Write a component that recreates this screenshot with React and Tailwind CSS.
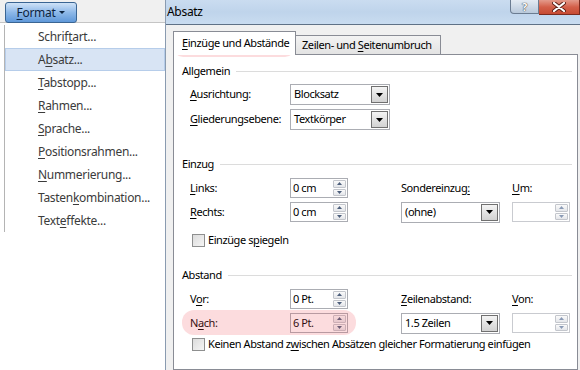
// Word "Format > Absatz" dialog, recreated with Tailwind classes

const Key = ({ children }) => (
  <span className="underline decoration-1 underline-offset-2">{children}</span>
);

const Triangle = ({ up, className = "fill-[#4d5f7c]" }) => (
  <svg width="5" height="3" viewBox="0 0 5 3" className={className}>
    {up ? <path d="M0 3 L2.5 0 L5 3 Z" /> : <path d="M0 0 L5 0 L2.5 3 Z" />}
  </svg>
);

const Spin = ({ value, disabled }) => (
  <div
    className={`w-[58px] h-[20px] border bg-white flex ${
      disabled ? "border-[#c9cbd0]" : "border-[#abadb3]"
    }`}
  >
    <div className="flex-1 pl-[2px] leading-[18px] text-black">{value}</div>
    <div className="w-[14px] flex flex-col py-[1px] pr-[1px] gap-[1px]">
      <div className="flex-1 border border-[#c3c6cc] rounded-[1px] bg-gradient-to-b from-[#fafafa] to-[#e4e6ea] flex items-center justify-center">
        <Triangle up className={disabled ? "fill-[#8a9ab5]" : "fill-[#4d5f7c]"} />
      </div>
      <div className="flex-1 border border-[#c3c6cc] rounded-[1px] bg-gradient-to-b from-[#fafafa] to-[#e4e6ea] flex items-center justify-center">
        <Triangle className={disabled ? "fill-[#8a9ab5]" : "fill-[#4d5f7c]"} />
      </div>
    </div>
  </div>
);

const Select = ({ value, width = "w-[100px]" }) => (
  <div className={`${width} h-[21px] border border-[#abadb3] bg-white flex items-center`}>
    <span className="flex-1 pl-[3px] text-black">{value}</span>
    <div className="w-[17px] h-[17px] mr-[1px] border border-[#707070] bg-gradient-to-b from-[#f4f4f4] to-[#d2d2d2] flex items-center justify-center">
      <svg width="7" height="4" viewBox="0 0 7 4">
        <path d="M0 0 L7 0 L3.5 4 Z" fill="#000" />
      </svg>
    </div>
  </div>
);

const CheckBox = ({ children }) => (
  <div className="flex items-center h-[14px] pl-[18px]">
    <div className="w-[13px] h-[13px] border border-[#8e8f8f] bg-gradient-to-br from-[#dcdcdc] to-[#f5f5f5]" />
    <span className="ml-[3px] text-black">{children}</span>
  </div>
);

const GroupHeader = ({ children }) => (
  <div className="h-[20px] flex items-center pl-[8px] pr-[5px] gap-[6px]">
    <span className="text-black">{children}</span>
    <div className="flex-1 h-px bg-[#dcdcdc]" />
  </div>
);

const Label = ({ children }) => (
  <div className="w-[100px] h-[20px] flex items-center text-black">{children}</div>
);

const menuItems = [
  ["Schrif", "t", "art..."],
  ["A", "b", "satz..."],
  ["", "T", "abstopp..."],
  ["", "R", "ahmen..."],
  ["", "S", "prache..."],
  ["", "P", "ositionsrahmen..."],
  ["", "N", "ummerierung..."],
  ["Tasten", "k", "ombination..."],
  ["Text", "e", "ffekte..."],
];

export default function App() {
  return (
    <div className="relative w-[580px] h-[370px] overflow-hidden flex bg-white whitespace-nowrap text-[12px] tracking-[-0.3px] font-['Segoe_UI','Noto_Sans',sans-serif]">
      {/* Left: Format menu */}
      <div className="w-[165px] flex flex-col">
        <div className="h-[23px] bg-[#f0f0f0] border-b border-[#c5c5c5] pl-[5px] pt-[2px]">
          <div className="w-[72px] h-[21px] rounded-[3px] border border-[#3a6593] bg-gradient-to-b from-[#cfe2f7] via-[#8db8e8] to-[#5f98d9] flex items-center justify-center gap-[4px] text-[#0d2440]">
            <span>
              <Key>F</Key>ormat
            </span>
            <svg width="6" height="3" viewBox="0 0 6 3">
              <path d="M0 0 L6 0 L3 3 Z" fill="#0d2440" />
            </svg>
          </div>
        </div>
        <div className="ml-[4px] mt-[2px] border-l border-[#b4b4b4] flex flex-col">
          {menuItems.map(([a, k, b], i) => (
            <div
              key={i}
              className={`h-[23px] flex items-center text-[#3b3b3b] ${
                i === 1 ? "bg-[#d8e4f4] border border-[#b6cdea] pl-[32px]" : "pl-[33px]"
              }`}
            >
              <span>
                {a}
                <Key>{k}</Key>
                {b}
              </span>
            </div>
          ))}
        </div>
      </div>

      {/* Right: Absatz dialog */}
      <div className="flex-1 flex flex-col bg-[#f0f0f0] border-l border-[#8a9bb0] text-[11px] tracking-[-0.42px]">
        <div className="relative h-[25px] border-b border-[#5f7186] bg-gradient-to-b from-[#cadcf0] via-[#bfd4eb] to-[#c9dcf0]">
          <span className="absolute left-[1px] top-[3px] text-[12px] tracking-[-0.3px] text-black">Absatz</span>
          <div className="absolute right-0 top-0 flex">
            <div className="w-[29px] h-[14px] border border-t-0 border-[#6b7c91] rounded-bl-[4px] bg-gradient-to-b from-[#e4ebf3] to-[#b9c9db] flex items-center justify-center text-[11px] font-bold leading-[13px] text-white [text-shadow:0_0_1px_#333,0_0_1px_#333]">
              ?
            </div>
            <div className="w-[41px] h-[15px] border border-t-0 border-l-0 border-[#7a2a1e] bg-gradient-to-b from-[#e39a8b] via-[#d35f49] to-[#c64a32] flex items-center justify-center">
              <svg width="14" height="10" viewBox="0 0 14 10">
                <path d="M2 1 L12 9 M12 1 L2 9" stroke="#5a1f16" strokeWidth="4" strokeLinecap="round" />
                <path d="M2 1 L12 9 M12 1 L2 9" stroke="#ffffff" strokeWidth="2.2" strokeLinecap="round" />
              </svg>
            </div>
          </div>
        </div>

        <div className="flex-1 flex flex-col pl-[7px] pt-[6px]">
          {/* Tabs */}
          <div className="flex items-end h-[23px]">
            <div className="relative z-10 w-[123px] h-[24px] -mb-px border border-b-0 border-[#898c95] bg-white flex items-center pl-[8px] text-black">
              <span>
                <Key>E</Key>inzüge und Abstände
              </span>
            </div>
            <div className="w-[145px] h-[19px] border border-l-0 border-b-0 border-[#898c95] bg-gradient-to-b from-[#f3f3f3] to-[#e3e3e3] flex items-center pl-[6px] text-black">
              <span>
                Zeilen- und <Key>S</Key>eitenumbruch
              </span>
            </div>
          </div>

          {/* Panel */}
          <div className="w-[405px] flex-1 border border-[#898c95] bg-white pt-[6px]">
            <GroupHeader>Allgemein</GroupHeader>
            <div className="pl-[16px] mt-[3px] flex flex-col gap-[4px]">
              <div className="flex items-center h-[21px]">
                <Label>
                  <span>
                    <Key>A</Key>usrichtung:
                  </span>
                </Label>
                <Select value="Blocksatz" />
              </div>
              <div className="flex items-center h-[21px]">
                <Label>
                  <span>
                    <Key>G</Key>liederungsebene:
                  </span>
                </Label>
                <Select value="Textkörper" />
              </div>
            </div>

            <div className="mt-[24px]">
              <GroupHeader>Einzug</GroupHeader>
            </div>
            <div className="pl-[16px] mt-[4px] flex flex-col gap-[4px]">
              <div className="flex items-center h-[20px]">
                <Label>
                  <span>
                    <Key>L</Key>inks:
                  </span>
                </Label>
                <Spin value="0 cm" />
                <div className="ml-[53px] w-[111px] text-black">
                  Sondereinzug<Key>:</Key>
                </div>
                <div className="text-black">
                  <Key>U</Key>m:
                </div>
              </div>
              <div className="flex items-center h-[20px]">
                <Label>
                  <span>
                    <Key>R</Key>echts:
                  </span>
                </Label>
                <Spin value="0 cm" />
                <div className="ml-[53px]">
                  <Select value="(ohne)" width="w-[99px]" />
                </div>
                <div className="ml-[12px]">
                  <Spin value="" disabled />
                </div>
              </div>
            </div>
            <div className="mt-[11px]">
              <CheckBox>
                Einzüge s<Key>p</Key>iegeln
              </CheckBox>
            </div>

            <div className="mt-[18px]">
              <GroupHeader>Abstand</GroupHeader>
            </div>
            <div className="pl-[16px] mt-[4px] flex flex-col gap-[4px]">
              <div className="flex items-center h-[20px]">
                <Label>
                  <span>
                    V<Key>o</Key>r:
                  </span>
                </Label>
                <Spin value="0 Pt." />
                <div className="ml-[53px] w-[111px] text-black">
                  <Key>Z</Key>eilenabstand:
                </div>
                <div className="text-black">
                  <Key>V</Key>on:
                </div>
              </div>
              <div className="flex items-center h-[20px]">
                <Label>
                  <span>
                    N<Key>a</Key>ch:
                  </span>
                </Label>
                <Spin value="6 Pt." />
                <div className="ml-[53px]">
                  <Select value="1.5 Zeilen" width="w-[99px]" />
                </div>
                <div className="ml-[12px]">
                  <Spin value="" disabled />
                </div>
              </div>
            </div>
            <div className="mt-[4px]">
              <CheckBox>
                Keinen Abstand z<Key>w</Key>ischen Absätzen gleicher Formatierung einfügen
              </CheckBox>
            </div>
          </div>
        </div>
      </div>

      {/* Annotation highlights */}
      <div className="absolute left-[173px] top-[31px] w-[122px] h-[26px] rounded-[10px] bg-[rgba(240,80,90,0.2)] pointer-events-none" />
      <div className="absolute left-[182px] top-[310px] w-[174px] h-[25px] rounded-[12px] bg-[rgba(240,80,90,0.2)] pointer-events-none" />
    </div>
  );
}
